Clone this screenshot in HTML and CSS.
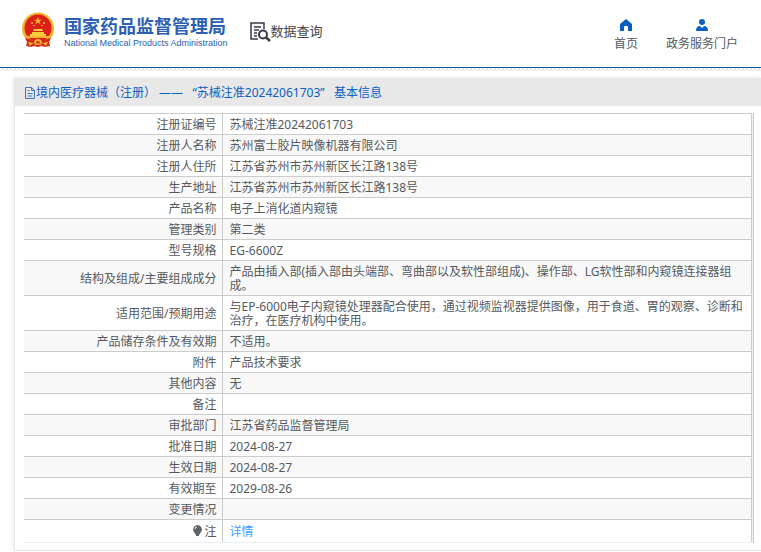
FILE: index.html
```html
<!DOCTYPE html>
<html lang="zh-CN">
<head>
<meta charset="utf-8">
<title>数据查询</title>
<link rel="stylesheet" href="styles.css">
</head>
<body>
<header class="header">
  <a class="brand" href="#">
    <svg class="emblem" viewBox="0 0 34 36" aria-hidden="true">
      <path d="M7 26 5 34l5 1 3-1 4 1 4-1 3 1 5-1-2-8z" fill="#d92b1c"/>
      <circle cx="17" cy="16.500" r="16" fill="#efb42c"/>
      <circle cx="17" cy="16" r="13.500" fill="#dc2015"/>
      <path d="m17 5 1 2.700h2.900l-2.300 1.700.9 2.800-2.500-1.700-2.500 1.700.9-2.800-2.300-1.700H16z" fill="#f3b432"/>
      <path d="M10 10h2v2h-2zM22 10h2v2h-2zM12 13h2v1h-2zM20 13h2v1h-2z" fill="#ef9a30"/>
      <path d="M12 19l1-2h8l1 2zM11 20h12v2h2v3H9v-3h2z" fill="#f8cf3c"/>
      <path d="M6 24h22v2H6z" fill="#f3b432"/>
      <path d="M4 26q13 4 26 0l-2 4q-11 3-22 0z" fill="#d92b1c"/>
      <path d="M14 31q0-3 3-3t3 3" fill="none" stroke="#f3b432" stroke-width="2"/>
      <path d="m7 30 5 1-3 3zM27 30l-5 1 3 3zM14 32h6v1h-6z" fill="#f3b432"/>
    </svg>
    <span class="brand-text">
      <strong class="brand-cn">国家药品监督管理局</strong>
      <span class="brand-en">National Medical Products Administration</span>
    </span>
  </a>
  <a class="query" href="#">
    <svg class="query-icon" viewBox="0 0 21 20" fill="none" stroke="#3b3948" aria-hidden="true">
      <path d="M8 17H1V1h13v6M4 5h7M4 8h5M4 11h3M4 14h3" stroke-width="1.500"/>
      <circle cx="13" cy="12.500" r="4" stroke-width="2"/>
      <path d="m16 15.500 4 3.500" stroke-width="2.500"/>
    </svg>
    <span>数据查询</span>
  </a>
  <nav class="nav">
    <a class="nav-item" href="#">
      <svg class="nav-icon" viewBox="0 0 12 12" fill="#0a5fc2" aria-hidden="true"><path d="M6 0 0 5v7h4V8q0-1 1-1h2q1 0 1 1v4h4V5z"/></svg>
      <span>首页</span>
    </a>
    <a class="nav-item" href="#">
      <svg class="nav-icon" viewBox="0 0 12 12" fill="#0a5fc2" aria-hidden="true"><circle cx="6" cy="3" r="3"/><path d="M0 12q0-5 4-5l2 2 2-2q4 0 4 5z"/></svg>
      <span>政务服务门户</span>
    </a>
  </nav>
</header>
<main class="panel">
  <h1 class="panel-title">
    <svg class="doc-icon" viewBox="0 0 10 12" fill="none" stroke="#3878c6" aria-hidden="true"><path d="M.5.500h6l3 3v8h-9zM6.500.500v3h3M2.500 3.500h2M2.500 6.500h5M2.500 9h5"/></svg>
    <span>境内医疗器械（注册） ——&nbsp;&nbsp; “苏械注准20242061703”&nbsp;&nbsp; 基本信息</span>
  </h1>
  <div class="panel-body">
    <div class="frame">
      <table class="info">
        <tbody>
          <tr><th scope="row">注册证编号</th><td>苏械注准20242061703</td></tr>
          <tr><th scope="row">注册人名称</th><td>苏州富士胶片映像机器有限公司</td></tr>
          <tr><th scope="row">注册人住所</th><td>江苏省苏州市苏州新区长江路138号</td></tr>
          <tr><th scope="row">生产地址</th><td>江苏省苏州市苏州新区长江路138号</td></tr>
          <tr><th scope="row">产品名称</th><td>电子上消化道内窥镜</td></tr>
          <tr><th scope="row">管理类别</th><td>第二类</td></tr>
          <tr><th scope="row">型号规格</th><td>EG-6600Z</td></tr>
          <tr><th scope="row">结构及组成/主要组成成分</th><td>产品由插入部(插入部由头端部、弯曲部以及软性部组成)、操作部、LG软性部和内窥镜连接器组成。</td></tr>
          <tr><th scope="row">适用范围/预期用途</th><td>与EP-6000电子内窥镜处理器配合使用，通过视频监视器提供图像，用于食道、胃的观察、诊断和治疗，在医疗机构中使用。</td></tr>
          <tr><th scope="row">产品储存条件及有效期</th><td>不适用。</td></tr>
          <tr><th scope="row">附件</th><td>产品技术要求</td></tr>
          <tr><th scope="row">其他内容</th><td>无</td></tr>
          <tr><th scope="row">备注</th><td></td></tr>
          <tr><th scope="row">审批部门</th><td>江苏省药品监督管理局</td></tr>
          <tr><th scope="row">批准日期</th><td>2024-08-27</td></tr>
          <tr><th scope="row">生效日期</th><td>2024-08-27</td></tr>
          <tr><th scope="row">有效期至</th><td>2029-08-26</td></tr>
          <tr><th scope="row">变更情况</th><td></td></tr>
          <tr class="note"><th scope="row"><svg class="bulb" viewBox="0 0 9 12" aria-hidden="true"><path d="M4.500 0a4.500 4.500 0 0 0-3 7.700L3 10h3l1.500-2.300A4.500 4.500 0 0 0 4.500 0zM3 10h3v1H3z" fill="#606266"/><path d="M2 4q0-2 2-2" fill="none" stroke="#fff"/></svg>注</th><td><a class="detail" href="#">详情</a></td></tr>
        </tbody>
      </table>
    </div>
  </div>
</main>
</body>
</html>
```
FILE: styles.css
```css
* {
  box-sizing: border-box;
}

body {
  margin: 0;
  background: #fff;
  color: #555a60;
  font-family: "Noto Sans", "Noto Sans CJK SC", sans-serif;
  font-size: 12px;
  line-height: 14px;
}

a {
  color: inherit;
  text-decoration: none;
}

svg {
  display: block;
  flex: none;
}

.header {
  display: flex;
  align-items: flex-start;
  height: 68px;
  padding: 0 23px 0 21px;
  border-bottom: 1px solid #0a5aa8;
}

/* Dotted strip under the header rule */
.header + .panel::before {
  content: "";
  position: absolute;
  top: 68px;
  left: 0;
  right: 0;
  height: 3px;
  background: conic-gradient(#e6e6e6 25%, transparent 0 50%, #e6e6e6 0 75%, transparent 0) 0 0 / 4px 4px;
}

.brand {
  display: flex;
  gap: 9px;
  padding-top: 12px;
  color: #2d5fb3;
}

.emblem {
  width: 34px;
  height: 36px;
}

.brand-text {
  display: flex;
  flex-direction: column;
  padding-top: 4px;
  white-space: nowrap;
}

.brand-cn {
  font-size: 18px;
  line-height: 20px;
}

.brand-en {
  font-family: "Liberation Sans", sans-serif;
  font-size: 9px;
  line-height: 14px;
}

.query {
  display: flex;
  margin-left: 22px;
  padding-top: 22px;
  color: #444;
  font-size: 13px;
  line-height: 18px;
  white-space: nowrap;
}

.query-icon {
  width: 21px;
  height: 20px;
}

.nav {
  display: flex;
  gap: 28px;
  margin-left: auto;
  padding-top: 19px;
  white-space: nowrap;
}

.nav-item {
  display: flex;
  flex-direction: column;
  align-items: center;
  gap: 6px;
}

.nav-icon {
  width: 12px;
  height: 12px;
}

.panel {
  margin: 10px 0 0 14px;
  border: 1px solid #e6e6e6;
  border-width: 0 0 1px 1px;
  box-shadow: 0 0 5px #e4e4e4;
}

.panel-title {
  display: flex;
  align-items: center;
  height: 28px;
  margin: 0;
  padding: 2px 0 0 10px;
  background: #e8e8e8;
  color: #0a5fc2;
  font-size: 12px;
  font-weight: 400;
  gap: 1px;
}

.doc-icon {
  width: 10px;
  height: 12px;
}

.panel-body {
  padding: 7px 7px 7px 9px;
}

.frame {
  padding-right: 1px;
  border-right: 1px solid #c9cacf;
  background: #f0f0f8;
}

.info {
  width: 100%;
  border-collapse: collapse;
  table-layout: fixed;
  background: #fff;
}

.info th,
.info td {
  height: 21px;
  padding: 4px 5px 2px 7px;
  border: 1px solid #ccc;
  font-weight: 400;
  text-align: left;
  vertical-align: middle;
}

.info th {
  width: 198px;
  border-left: 0;
  text-align: right;
}

.info tr:nth-child(even) {
  background: #f8f8f8;
}

.info .note th,
.info .note td {
  height: 23px;
  border-bottom-color: #ebeef5;
}

.bulb {
  display: inline-block;
  width: 9px;
  height: 12px;
  margin-right: 2px;
  vertical-align: -1px;
}

.detail {
  color: #409eff;
}
```
